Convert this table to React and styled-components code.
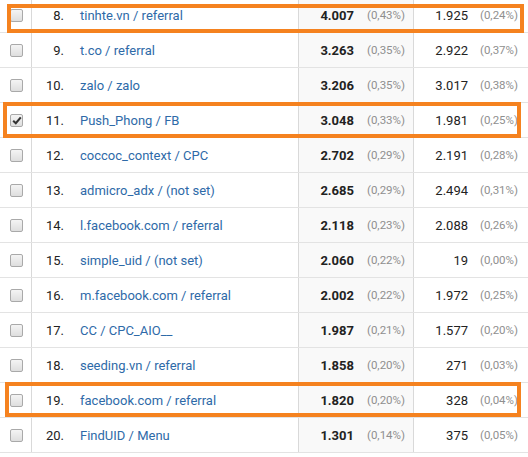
import React from "react";
import styled, { createGlobalStyle } from "styled-components";

const Global = createGlobalStyle`
  html, body { margin: 0; padding: 0; background: #fff; }
  body { font-family: Roboto, "Noto Sans", Arial, sans-serif; overflow: hidden; }
  *, *::before, *::after { box-sizing: border-box; }
`;

const Table = styled.div`
  width: 528px;
  margin-top: -2px;
  display: flex;
  flex-direction: column;
`;

const Row = styled.div`
  position: relative;
  display: grid;
  grid-template-columns: 32px 267px 115px 1fr;
  height: 35px;
  border-bottom: 1px solid #e3e3e3;
  font-size: 13px;
  color: #222;
`;

const Cell = styled.div`
  display: flex;
  align-items: center;
  border-right: 1px solid ${(p) => (p.$last ? "transparent" : "#d9d9d9")};
  background: ${(p) => (p.$shaded ? "#f9f9f9" : "#fff")};
`;

const CheckCell = styled(Cell)`
  padding-left: 10px;
`;

const Box = styled.span`
  width: 13px;
  height: 13px;
  border: 1px solid #a9a9a9;
  border-radius: 2px;
  background: linear-gradient(#f4f4f4, #dedede);
  display: flex;
  align-items: center;
  justify-content: center;
`;

const Index = styled.span`
  width: 32px;
  text-align: right;
  color: #222;
`;

const Name = styled.span`
  margin-left: 16px;
  color: #2e6aa8;
  white-space: nowrap;
`;

const Metric = styled(Cell)`
  display: grid;
  grid-template-columns: 1fr ${(p) => p.$pctW}px;
  align-items: center;
  padding-right: ${(p) => p.$pad}px;
`;

const Num = styled.span`
  text-align: right;
  font-weight: ${(p) => (p.$bold ? 700 : 400)};
  color: #222;
`;

const Pct = styled.span`
  text-align: right;
  font-size: 11.5px;
  color: #8f8f8f;
`;

const Highlight = styled.div`
  position: absolute;
  left: ${(p) => p.$l}px;
  top: ${(p) => p.$t}px;
  right: ${(p) => p.$r}px;
  bottom: ${(p) => p.$b}px;
  border: 4px solid #f5821f;
  pointer-events: none;
`;

const Check = () => (
  <svg width="10" height="9" viewBox="0 0 10 9">
    <path d="M1.2 4.8 L3.8 7.3 L8.8 1.4" fill="none" stroke="#333" strokeWidth="2.1" />
  </svg>
);

const rows = [
  [8, "tinhte.vn / referral", "4.007", "0,43%", "1.925", "0,24%", false, { l: 7, t: 6, r: 4, b: -1 }],
  [9, "t.co / referral", "3.263", "0,35%", "2.922", "0,37%"],
  [10, "zalo / zalo", "3.206", "0,35%", "3.017", "0,38%"],
  [11, "Push_Phong / FB", "3.048", "0,33%", "1.981", "0,25%", true, { l: 3, t: -1, r: 7, b: -1 }],
  [12, "coccoc_context / CPC", "2.702", "0,29%", "2.191", "0,28%"],
  [13, "admicro_adx / (not set)", "2.685", "0,29%", "2.494", "0,31%"],
  [14, "l.facebook.com / referral", "2.118", "0,23%", "2.088", "0,26%"],
  [15, "simple_uid / (not set)", "2.060", "0,22%", "19", "0,00%"],
  [16, "m.facebook.com / referral", "2.002", "0,22%", "1.972", "0,25%"],
  [17, "CC / CPC_AIO__", "1.987", "0,21%", "1.577", "0,20%"],
  [18, "seeding.vn / referral", "1.858", "0,20%", "271", "0,03%"],
  [19, "facebook.com / referral", "1.820", "0,20%", "328", "0,04%", false, { l: 5, t: -1, r: 7, b: 0 }],
  [20, "FindUID / Menu", "1.301", "0,14%", "375", "0,05%"],
];

export default function App() {
  return (
    <>
      <Global />
      <Table>
        {rows.map(([i, name, a, ap, b, bp, checked, hl]) => (
          <Row key={i}>
            <CheckCell>
              <Box>{checked && <Check />}</Box>
            </CheckCell>
            <Cell>
              <Index>{i}.</Index>
              <Name>{name}</Name>
            </Cell>
            <Metric $shaded $pctW={51} $pad={8}>
              <Num $bold>{a}</Num>
              <Pct>({ap})</Pct>
            </Metric>
            <Metric $last $pctW={50} $pad={9}>
              <Num>{b}</Num>
              <Pct>({bp})</Pct>
            </Metric>
            {hl && <Highlight $l={hl.l} $t={hl.t} $r={hl.r} $b={hl.b} />}
          </Row>
        ))}
      </Table>
    </>
  );
}
